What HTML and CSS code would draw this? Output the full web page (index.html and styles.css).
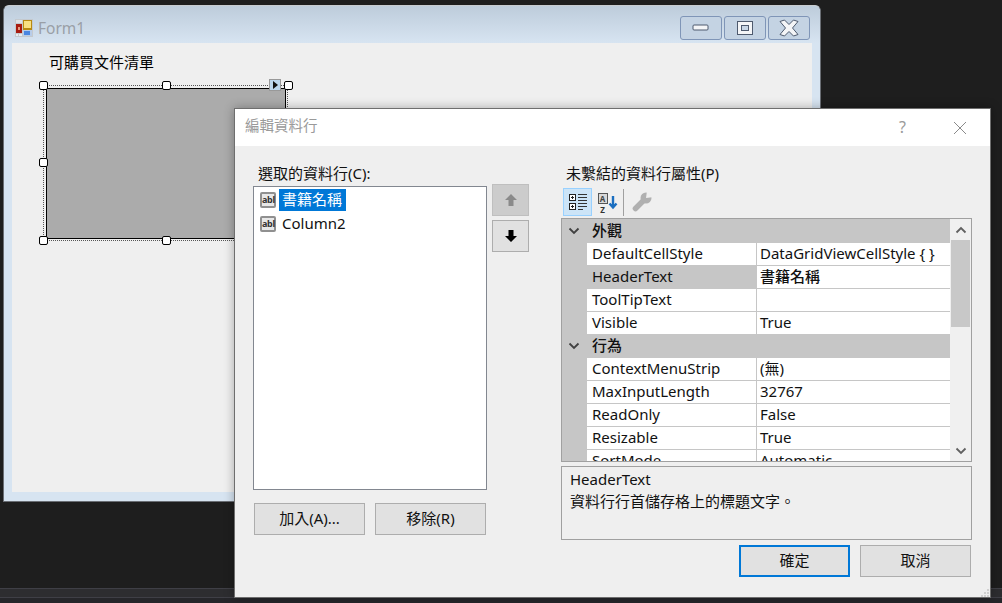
FILE: index.html
```html
<!DOCTYPE html>
<html lang="zh-Hant">
<head>
    <meta charset="utf-8">
    <title>Form1</title>
    <link rel="stylesheet" href="styles.css">
</head>
<body>
    <div class="desktop">
        <div class="bottom-strip"></div>

        <!-- Designer form -->
        <div class="form-window">
            <div class="form-title">
                <svg class="form-icon" width="18" height="18" viewBox="0 0 18 18">
                    <rect x="0" y="0" width="18" height="18" fill="#c4c9ce"/>
                    <rect x="1" y="1" width="6" height="3" fill="#dfe3e7"/>
                    <rect x="1" y="5" width="6" height="9" fill="#a81c10"/>
                    <rect x="3" y="8" width="2" height="3" fill="#e89a80"/>
                    <rect x="1" y="15" width="2" height="2" fill="#e8ecf0"/>
                    <rect x="4" y="15" width="3" height="2" fill="#e8ecf0"/>
                    <rect x="8" y="1" width="9" height="10" fill="#b88a10"/>
                    <rect x="9" y="2" width="7" height="7" fill="#f8e080"/>
                    <rect x="8" y="11" width="9" height="6" fill="#b8cce8"/>
                    <rect x="9" y="12" width="6" height="4" fill="#4a86e0"/>
                </svg>
                <span class="form-name">Form1</span>
                <div class="win-buttons">
                    <div class="win-btn">
                        <svg width="18" height="8" viewBox="0 0 18 8"><rect x="1" y="1" width="15" height="5" rx="1" fill="#f4f5f7" stroke="#4e5a6e"/></svg>
                    </div>
                    <div class="win-btn">
                        <svg width="18" height="16" viewBox="0 0 18 16"><rect x="1.5" y="1.5" width="15" height="13" fill="#f4f5f7" stroke="#4e5a6e"/><rect x="5.5" y="5.5" width="7" height="5" fill="#c8d6e6" stroke="#4e5a6e"/></svg>
                    </div>
                    <div class="win-btn">
                        <svg width="20" height="18" viewBox="0 0 20 18"><path d="M1 2.5 L5.5 1 L10 5.5 L14.5 1 L19 2.5 L13.5 9 L19 15.5 L14.5 17 L10 12.5 L5.5 17 L1 15.5 L6.5 9 Z" fill="#f4f5f7" stroke="#4e5a6e" stroke-linejoin="round"/></svg>
                    </div>
                </div>
            </div>
            <div class="form-client">
                <div class="form-label">可購買文件清單</div>
                <div class="grid-host">
                    <div class="grid-placeholder"></div>
                    <span class="handle h-tl"></span>
                    <span class="handle h-tc"></span>
                    <span class="handle h-tr"></span>
                    <span class="handle h-ml"></span>
                    <span class="handle h-bl"></span>
                    <span class="handle h-bc"></span>
                    <span class="handle h-br"></span>
                    <span class="smart-tag"></span>
                </div>
            </div>
        </div>

        <!-- Edit columns dialog -->
        <div class="dialog">
            <div class="dialog-title">
                <span class="dialog-name">編輯資料行</span>
                <span class="help-btn">?</span>
                <svg class="close-x" width="14" height="14" viewBox="0 0 14 14"><path d="M1 1 L13 13 M13 1 L1 13" stroke="#8a8a8a" stroke-width="1" fill="none"/></svg>
            </div>
            <div class="dialog-body">
                <div class="left-col">
                    <div class="label">選取的資料行(C):</div>
                    <div class="list-row">
                        <div class="listbox">
                            <div class="list-item">
                                <span class="abl">abl</span>
                                <span class="item-text selected">書籍名稱</span>
                            </div>
                            <div class="list-item">
                                <span class="abl">abl</span>
                                <span class="item-text">Column2</span>
                            </div>
                        </div>
                        <div class="move-btns">
                            <div class="btn move-btn disabled">
                                <svg width="14" height="14" viewBox="0 0 14 14"><path d="M7 1 L13 7 L9.5 7 L9.5 13 L4.5 13 L4.5 7 L1 7 Z" fill="#8a8a8a"/></svg>
                            </div>
                            <div class="btn move-btn">
                                <svg width="14" height="14" viewBox="0 0 14 14"><path d="M7 13 L13 7 L9.5 7 L9.5 1 L4.5 1 L4.5 7 L1 7 Z" fill="#000"/></svg>
                            </div>
                        </div>
                    </div>
                    <div class="add-row">
                        <div class="btn text-btn">加入(A)...</div>
                        <div class="btn text-btn">移除(R)</div>
                    </div>
                </div>

                <div class="right-col">
                    <div class="label">未繫結的資料行屬性(P)</div>
                    <div class="toolbar">
                        <div class="tool-btn active">
                            <svg width="20" height="20" viewBox="0 0 20 20">
                                <rect x="1.5" y="2.5" width="6" height="6" fill="#fff" stroke="#222"/>
                                <path d="M3 5.5 H6 M4.5 4 V7" stroke="#222"/>
                                <rect x="1.5" y="11.5" width="6" height="6" fill="#fff" stroke="#222"/>
                                <path d="M3 14.5 H6 M4.5 13 V16" stroke="#222"/>
                                <path d="M10 2.5 H19 M10 5.5 H19 M10 8.5 H19 M10 11.5 H19 M10 14.5 H19 M10 17.5 H15" stroke="#333"/>
                            </svg>
                        </div>
                        <div class="tool-btn sort-btn">
                            <div class="sort-letters">
                                <span class="sort-a">A</span>
                                <span class="sort-z">Z</span>
                            </div>
                            <svg width="10" height="15" viewBox="0 0 10 15"><path d="M5 1 V12 M1.5 8.5 L5 12.5 L8.5 8.5" stroke="#1a6ec0" stroke-width="2.4" fill="none"/></svg>
                        </div>
                        <div class="tool-sep"></div>
                        <div class="tool-btn wrench-btn">
                            <svg width="20" height="20" viewBox="0 0 20 20">
                                <path d="M3.5 16.5 L11 9" stroke="#b0b0b0" stroke-width="5.5" stroke-linecap="round"/>
                                <circle cx="14" cy="6" r="5.5" fill="#b0b0b0"/>
                                <path d="M14 6 L15 -1 L21 -1 L21 5 Z" fill="#efefef"/>
                            </svg>
                        </div>
                    </div>
                    <div class="prop-grid">
                        <div class="prop-rows">
                            <div class="cat-row">
                                <svg class="chev" width="12" height="8" viewBox="0 0 12 8"><path d="M1.5 1.5 L6 6 L10.5 1.5" stroke="#404040" stroke-width="1.8" fill="none"/></svg>
                                <span>外觀</span>
                            </div>
                            <div class="prop-row"><span class="prop-name">DefaultCellStyle</span><span class="prop-val">DataGridViewCellStyle { }</span></div>
                            <div class="prop-row"><span class="prop-name current">HeaderText</span><span class="prop-val strong">書籍名稱</span></div>
                            <div class="prop-row"><span class="prop-name">ToolTipText</span><span class="prop-val"></span></div>
                            <div class="prop-row"><span class="prop-name">Visible</span><span class="prop-val">True</span></div>
                            <div class="cat-row">
                                <svg class="chev" width="12" height="8" viewBox="0 0 12 8"><path d="M1.5 1.5 L6 6 L10.5 1.5" stroke="#404040" stroke-width="1.8" fill="none"/></svg>
                                <span>行為</span>
                            </div>
                            <div class="prop-row"><span class="prop-name">ContextMenuStrip</span><span class="prop-val">(無)</span></div>
                            <div class="prop-row"><span class="prop-name">MaxInputLength</span><span class="prop-val">32767</span></div>
                            <div class="prop-row"><span class="prop-name">ReadOnly</span><span class="prop-val">False</span></div>
                            <div class="prop-row"><span class="prop-name">Resizable</span><span class="prop-val">True</span></div>
                            <div class="prop-row"><span class="prop-name">SortMode</span><span class="prop-val">Automatic</span></div>
                        </div>
                        <div class="scrollbar">
                            <div class="scroll-arrow">
                                <svg width="12" height="8" viewBox="0 0 12 8"><path d="M1.5 6.5 L6 2 L10.5 6.5" stroke="#606060" stroke-width="1.8" fill="none"/></svg>
                            </div>
                            <div class="scroll-thumb"></div>
                            <div class="scroll-arrow bottom">
                                <svg width="12" height="8" viewBox="0 0 12 8"><path d="M1.5 1.5 L6 6 L10.5 1.5" stroke="#606060" stroke-width="1.8" fill="none"/></svg>
                            </div>
                        </div>
                    </div>
                    <div class="help-box">
                        <div>HeaderText</div>
                        <div>資料行行首儲存格上的標題文字。</div>
                    </div>
                    <div class="ok-row">
                        <div class="btn text-btn default">確定</div>
                        <div class="btn text-btn">取消</div>
                    </div>
                </div>
            </div>
            <svg class="grip" width="10" height="8" viewBox="0 0 10 8"><path d="M7 0h2v2H7z M4 3h2v2H4z M7 3h2v2H7z M1 6h2v2H1z M4 6h2v2H4z M7 6h2v2H7z" fill="#d0d0d0"/></svg>
        </div>
    </div>
</body>
</html>
```

FILE: styles.css
```css
* {
    box-sizing: border-box;
}
html, body {
    margin: 0;
    padding: 0;
}
body {
    font-family: "Noto Sans", "Noto Sans CJK TC", sans-serif;
    font-size: 15px;
    color: #111;
    background-color: #1e1e1e;
}
.desktop {
    position: relative;
    width: 1002px;
    height: 603px;
    overflow: hidden;
    background-color: #26262a;
}
.bottom-strip {
    position: absolute;
    left: 0;
    right: 0;
    top: 0;
    height: 598px;
    background: linear-gradient(#1e1e1e 588px, #3f3f46 588px, #3f3f46 589px, #2d2d30 589px, #2d2d30 597px, #3f3f46 597px);
}

/* form window */
.form-window {
    position: absolute;
    left: 3px;
    top: 5px;
    width: 818px;
    height: 497px;
    padding: 0 8px 9px 8px;
    background: #d7e4f1;
    border: 1px solid #6a6e74;
    border-top-color: #c8ccd0;
    border-radius: 6px 6px 0 0;
    display: flex;
    flex-direction: column;
}
.form-title {
    height: 37px;
    flex-shrink: 0;
    margin: 0 -8px;
    padding: 13px 10px 0 11px;
    background: linear-gradient(#bdccdb, #d7e4f1);
    border-radius: 5px 5px 0 0;
    display: flex;
    align-items: flex-start;
}
.form-icon {
    margin-right: 5px;
}
.form-name {
    font-size: 15.5px;
    line-height: 18px;
    color: #9a9fa6;
}
.win-buttons {
    margin-left: auto;
    margin-top: -3px;
    display: flex;
    gap: 2px;
}
.win-btn {
    width: 42px;
    height: 24px;
    background: #c4d3e3;
    border: 1px solid #7f95b7;
    border-radius: 3px;
    display: flex;
    align-items: center;
    justify-content: center;
}
.form-client {
    flex: 1;
    background-color: #efefef;
    padding: 10px 0 0 37px;
}
.form-label {
    height: 20px;
    line-height: 19px;
    color: #000;
}
.grid-host {
    position: relative;
    width: 245px;
    height: 156px;
    margin: 12px 0 0 -6px;
    border: 1px dotted #555;
    padding: 2px 1px 1px 2px;
}
.grid-placeholder {
    width: 100%;
    height: 100%;
    background-color: #ababab;
    border: 1px solid #000;
}
.handle {
    position: absolute;
    width: 9px;
    height: 9px;
    background: #fff;
    border: 1px solid #000;
    border-radius: 2px;
}
.h-tl { left: -5px; top: -5px; }
.h-tc { left: 118px; top: -5px; }
.h-tr { left: 240px; top: -5px; }
.h-ml { left: -5px; top: 72px; }
.h-bl { left: -5px; top: 150px; }
.h-bc { left: 118px; top: 150px; }
.h-br { left: 240px; top: 150px; }
.smart-tag {
    position: absolute;
    left: 225px;
    top: -7px;
    width: 12px;
    height: 12px;
    background: #bcd7ee;
    border: 1px solid #999;
}
.smart-tag::after {
    content: "";
    position: absolute;
    left: 3px;
    top: 1px;
    border-left: 5px solid #111;
    border-top: 4px solid transparent;
    border-bottom: 4px solid transparent;
}

/* dialog */
.dialog {
    position: absolute;
    left: 234px;
    top: 108px;
    width: 757px;
    height: 490px;
    background-color: #efefef;
    border: 1px solid #6e6e6e;
    box-shadow: 0 0 10px rgba(0, 0, 0, 0.3);
}
.dialog-title {
    height: 37px;
    background-color: #fff;
    padding: 0 23px 3px 10px;
    display: flex;
    align-items: center;
}
.dialog-name {
    font-size: 14.5px;
    line-height: 18px;
    padding-bottom: 2px;
    color: #9a9a9a;
}
.help-btn {
    margin-left: auto;
    margin-right: 47px;
    margin-top: 1px;
    font-size: 16px;
    color: #9a9a9a;
}
.close-x {
    margin-top: 3px;
}
.dialog-body {
    padding: 18px 0 0 18px;
    display: flex;
    gap: 32px;
}
.label {
    height: 20px;
    line-height: 18px;
    margin-left: 5px;
    white-space: nowrap;
}
.left-col {
    width: 276px;
}
.list-row {
    display: flex;
    gap: 5px;
    margin-top: 2px;
}
.listbox {
    width: 234px;
    height: 304px;
    background: #fff;
    border: 1px solid #828790;
    padding: 2px 0 0 6px;
}
.list-item {
    height: 22px;
    margin-bottom: 2px;
    display: flex;
    align-items: center;
}
.abl {
    width: 16px;
    height: 16px;
    margin-right: 3px;
    font-size: 9px;
    font-weight: bold;
    line-height: 12px;
    letter-spacing: -0.3px;
    text-align: center;
    color: #333;
    background: #e8e8e8;
    border: 2px solid #909090;
    border-radius: 2px;
}
.item-text {
    height: 22px;
    line-height: 20px;
    padding: 0 4px 0 3px;
}
.item-text.selected {
    background-color: #0078d7;
    color: #fff;
}
.move-btns {
    margin-top: -2px;
    display: flex;
    flex-direction: column;
    gap: 4px;
}
.btn {
    background-color: #e1e1e1;
    border: 1px solid #adadad;
    display: flex;
    align-items: center;
    justify-content: center;
}
.move-btn {
    width: 37px;
    height: 32px;
}
.move-btn.disabled {
    background-color: #cccccc;
    border-color: #bfbfbf;
}
.add-row {
    display: flex;
    gap: 10px;
    margin: 13px 0 0 1px;
}
.text-btn {
    width: 111px;
    height: 32px;
    padding-bottom: 3px;
}
.text-btn.default {
    border: 2px solid #0078d7;
}
.right-col {
    width: 411px;
}
.toolbar {
    height: 28px;
    margin: 4px 0 2px 2px;
    display: flex;
    align-items: center;
}
.tool-btn {
    height: 28px;
    display: flex;
    align-items: center;
    justify-content: center;
}
.tool-btn.active {
    width: 29px;
    background-color: #cce4f7;
    border: 1px solid #99d1ff;
}
.sort-btn {
    width: 21px;
    margin-left: 5px;
}
.sort-letters {
    width: 10px;
    margin-top: 3px;
    display: flex;
    flex-direction: column;
    align-items: center;
    font-size: 8px;
    font-weight: bold;
    line-height: 11px;
}
.sort-a {
    width: 10px;
    height: 11px;
    text-align: center;
    color: #444;
    background-color: #d8d8d8;
    border: 1px solid #555;
    line-height: 9px;
}
.sort-z {
    color: #333;
}
.tool-sep {
    width: 1px;
    height: 27px;
    margin-left: 5px;
    background-color: #a0a0a0;
}
.wrench-btn {
    margin-left: 8px;
}
.prop-grid {
    height: 244px;
    background-color: #f0f0f0;
    border: 1px solid #a0a0a0;
    display: flex;
}
.prop-rows {
    width: 388px;
    background-color: #c6c6c6;
    overflow: hidden;
}
.cat-row {
    height: 23px;
    line-height: 23px;
    display: flex;
    align-items: center;
    font-weight: 500;
    padding-left: 6px;
    gap: 12px;
}
.prop-row {
    height: 23px;
    margin-left: 25px;
    background-color: #fff;
    border-top: 1px solid #c6c6c6;
    display: flex;
}
.prop-name {
    width: 170px;
    flex-shrink: 0;
    padding-left: 5px;
    line-height: 20px;
    border-right: 1px solid #c6c6c6;
}
.prop-name.current {
    background-color: #c6c6c6;
}
.prop-val {
    padding-left: 3px;
    line-height: 20px;
    white-space: nowrap;
}
.prop-val.strong {
    font-weight: 500;
}
.scrollbar {
    flex: 1;
    display: flex;
    flex-direction: column;
    align-items: center;
}
.scroll-arrow {
    height: 21px;
    display: flex;
    align-items: center;
    justify-content: center;
}
.scroll-arrow.bottom {
    margin-top: auto;
}
.scroll-thumb {
    width: 19px;
    height: 87px;
    background-color: #c8c8c8;
}
.help-box {
    height: 74px;
    margin-top: 4px;
    padding: 1px 8px;
    line-height: 22px;
    border: 1px solid #a0a0a0;
}
.ok-row {
    display: flex;
    justify-content: flex-end;
    gap: 10px;
    margin-top: 5px;
    padding-right: 1px;
}
.grip {
    position: absolute;
    right: 0;
    bottom: 0;
}
```
